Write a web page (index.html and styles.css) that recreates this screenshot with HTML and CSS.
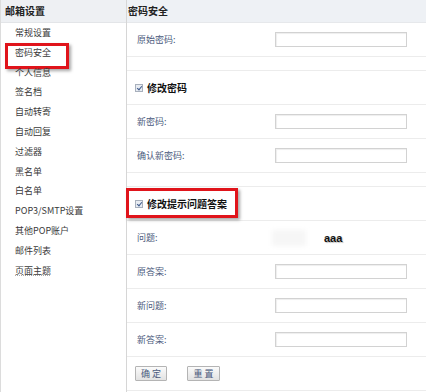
FILE: index.html
```html
<!DOCTYPE html>
<html lang="zh-CN">
<head>
  <meta charset="UTF-8" />
  <title>密码安全</title>
  <link rel="stylesheet" href="styles.css">
</head>
<body>
  <div class="page">

    <!-- Sidebar -->
    <div class="sidebar">
      <div class="sidebar-title">邮箱设置</div>
      <ul class="menu">
        <li>常规设置</li>
        <li class="marked">密码安全</li>
        <li>个人信息</li>
        <li>签名档</li>
        <li>自动转寄</li>
        <li>自动回复</li>
        <li>过滤器</li>
        <li>黑名单</li>
        <li>白名单</li>
        <li>POP3/SMTP设置</li>
        <li>其他POP账户</li>
        <li>邮件列表</li>
        <li class="focused">页面主题</li>
      </ul>
    </div>

    <!-- Main -->
    <div class="main">
      <div class="main-title">密码安全</div>

      <div class="row">
        <span class="label">原始密码:</span>
        <input class="field" type="password" />
      </div>
      <div class="row blank"></div>

      <div class="row">
        <label class="check-title"><span class="box"></span>修改密码</label>
      </div>
      <div class="row">
        <span class="label">新密码:</span>
        <input class="field" type="password" />
      </div>
      <div class="row">
        <span class="label">确认新密码:</span>
        <input class="field" type="password" />
      </div>
      <div class="row blank"></div>

      <div class="row">
        <label class="check-title marked-title"><span class="box"></span>修改提示问题答案</label>
      </div>
      <div class="row">
        <span class="label">问题:</span>
        <span class="hidden-value"></span>
        <span class="answer">aaa</span>
      </div>
      <div class="row">
        <span class="label">原答案:</span>
        <input class="field" type="text" />
      </div>
      <div class="row">
        <span class="label">新问题:</span>
        <input class="field" type="text" />
      </div>
      <div class="row">
        <span class="label">新答案:</span>
        <input class="field" type="text" />
      </div>
      <div class="row buttons">
        <button class="btn">确 定</button>
        <button class="btn">重 置</button>
      </div>
    </div>

  </div>
</body>
</html>
```

FILE: styles.css
```css
* {
  box-sizing: border-box;
}

body {
  margin: 0;
  font-family: "Noto Sans CJK SC", "Liberation Sans", sans-serif;
  font-size: 9px;
  color: #333;
  background-color: #fff;
}

.page {
  display: flex;
  height: 392px;
}

/* Sidebar */
.sidebar {
  width: 127px;
  border-left: 1px solid #dcdcdc;
  border-right: 1px solid #d6d6d6;
  background-color: #fff;
}

.sidebar-title {
  height: 23px;
  line-height: 22px;
  padding-left: 4px;
  font-size: 10px;
  font-weight: bold;
  color: #222;
  background-color: #eef0f3;
  border-bottom: 1px solid #e3e5e8;
}

.menu {
  list-style: none;
  margin: 0;
  padding: 0;
}

.menu li {
  position: relative;
  height: 19.8px;
  line-height: 19.8px;
  padding-left: 14px;
  color: #3a3a3a;
}

.menu li.marked::after {
  content: "";
  position: absolute;
  left: 4px;
  top: 0;
  width: 58px;
  height: 20px;
  border: 3px solid #e0141b;
  box-shadow: 2px 2px 3px rgba(0, 0, 0, 0.35);
}

.menu li.focused {
  text-decoration: underline dotted #aaa;
}

/* Main */
.main {
  flex: 1;
}

.main-title {
  height: 23px;
  line-height: 22px;
  padding-left: 1px;
  font-size: 10px;
  font-weight: bold;
  color: #222;
  background-color: #eef1f5;
  border-bottom: 1px solid #e6e8eb;
}

.row {
  display: flex;
  align-items: center;
  height: 34px;
  padding-left: 10px;
  border-bottom: 1px solid #ececec;
}

.row.blank {
  height: 14px;
}

.label {
  width: 138px;
  color: #4a5a7c;
}

.field {
  width: 132px;
  height: 15px;
  margin: 0;
  padding: 0;
  border: 1px solid #d2d2d2;
  box-shadow: inset 1px 1px 1px #eee;
  background-color: #fff;
}

.check-title {
  position: relative;
  display: inline-flex;
  align-items: center;
  margin-left: -2px;
  font-size: 10px;
  font-weight: bold;
  color: #111;
}

.box {
  position: relative;
  width: 8px;
  height: 8px;
  margin-right: 4px;
  border: 1px solid #a8b0bc;
  background-color: #e8ecf2;
}

.box::after {
  content: "";
  position: absolute;
  left: 2px;
  top: 0;
  width: 2px;
  height: 4px;
  border-right: 1px solid #3e5a8c;
  border-bottom: 1px solid #3e5a8c;
  transform: rotate(40deg);
}

.marked-title::after {
  content: "";
  position: absolute;
  left: -9px;
  right: -11px;
  top: -8px;
  bottom: -7px;
  border: 3px solid #e0141b;
  box-shadow: 2px 2px 3px rgba(0, 0, 0, 0.35);
}

.hidden-value {
  width: 34px;
  height: 16px;
  margin-left: -3px;
  background-color: #f6f6f6;
  filter: blur(2px);
}

.answer {
  margin-left: 18px;
  font-family: "Liberation Sans", sans-serif;
  font-size: 11px;
  font-weight: bold;
  color: #111;
  text-shadow: 1px 1px 1px rgba(0, 0, 0, 0.25);
}

.buttons {
  gap: 20px;
  padding-left: 8px;
}

.btn {
  width: 32px;
  height: 15px;
  padding: 0;
  font-family: "Noto Sans CJK SC", sans-serif;
  font-size: 9px;
  color: #4a5a7c;
  border: 1px solid #b4b4b4;
  border-radius: 1px;
  background: linear-gradient(#fbfbfb, #e2e2e2);
}

.btn + .btn {
  width: 33px;
}
```
